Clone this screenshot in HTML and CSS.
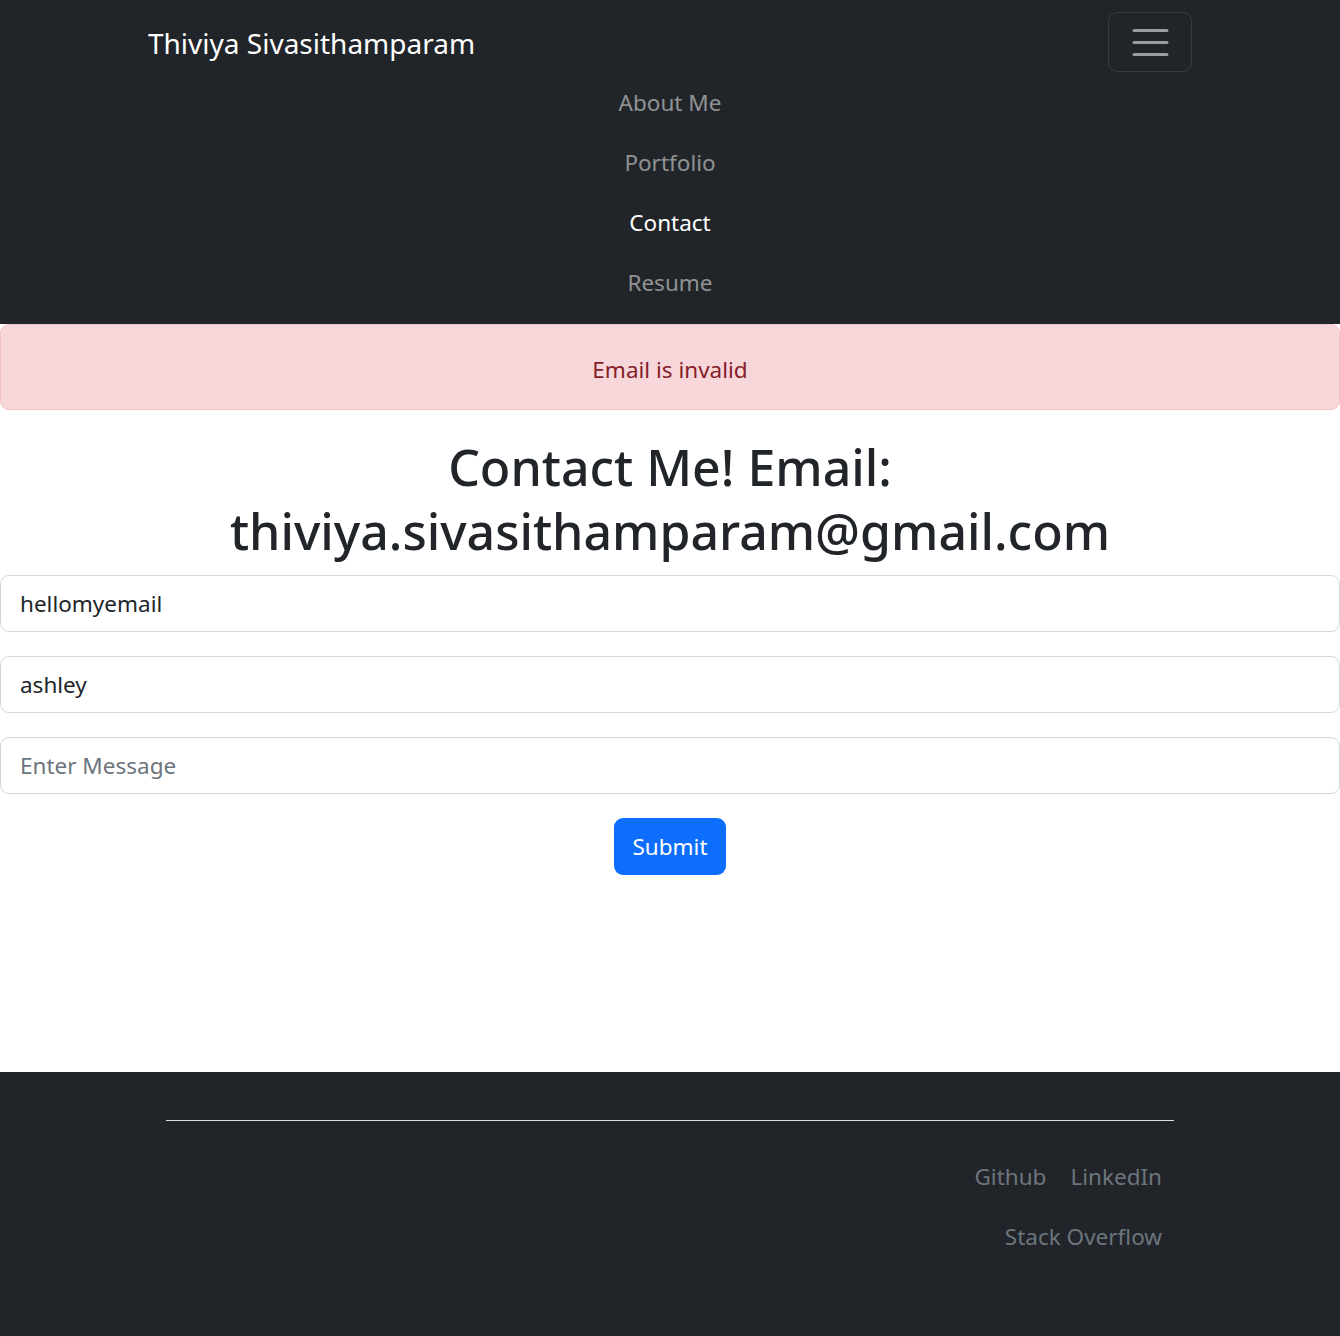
FILE: index.html
```html
<!DOCTYPE html>
<html lang="en">
<head>
<meta charset="utf-8">
<title>Contact - Thiviya Sivasithamparam</title>
<link rel="stylesheet" href="styles.css">
</head>
<body>
<header class="navbar">
  <div class="navbar-top">
    <a class="brand" href="#">Thiviya Sivasithamparam</a>
    <button class="toggler" type="button" aria-label="Toggle navigation">
      <svg width="45" height="45" viewBox="0 0 30 30" aria-hidden="true">
        <path d="M4 7h22M4 15h22M4 23h22" stroke="rgba(255,255,255,0.55)" stroke-width="2" stroke-linecap="round"/>
      </svg>
    </button>
  </div>
  <nav class="nav-list">
    <a class="nav-link" href="#">About Me</a>
    <a class="nav-link" href="#">Portfolio</a>
    <a class="nav-link active" href="#">Contact</a>
    <a class="nav-link" href="#">Resume</a>
  </nav>
</header>

<main class="content">
  <div class="alert">Email is invalid</div>
  <h1 class="title">Contact Me! Email:<br>thiviya.sivasithamparam@gmail.com</h1>
  <form class="form">
    <input class="field" type="text" value="hellomyemail">
    <input class="field" type="text" value="ashley">
    <input class="field" type="text" placeholder="Enter Message">
    <div class="actions">
      <button class="btn-submit" type="button">Submit</button>
    </div>
  </form>
</main>

<footer class="footer">
  <div class="footer-inner">
    <hr class="rule">
    <ul class="footer-links">
      <li><a href="#">Github</a></li>
      <li><a href="#">LinkedIn</a></li>
      <li><a href="#">Stack Overflow</a></li>
    </ul>
  </div>
</footer>
</body>
</html>
```

FILE: styles.css
```css
* { box-sizing: border-box; }

body {
  margin: 0;
  font-family: "Noto Sans", "Open Sans", "Liberation Sans", sans-serif;
  color: #212529;
  background: #fff;
}

a { text-decoration: none; }

.navbar {
  background: #212529;
  padding: 12px 0;
}

.navbar-top {
  width: 1080px;
  margin: 0 auto;
  padding: 0 18px;
  display: flex;
  justify-content: space-between;
  align-items: center;
  height: 60px;
}

.brand {
  color: #fff;
  font-size: 28px;
  line-height: 45px;
  margin-top: 2px;
}

.toggler {
  width: 84px;
  height: 60px;
  background: transparent;
  border: 1px solid rgba(255, 255, 255, 0.1);
  border-radius: 9px;
  padding: 0;
  display: flex;
  align-items: center;
  justify-content: center;
}

.toggler svg { display: block; }

.nav-list {
  display: flex;
  flex-direction: column;
  align-items: center;
}

.nav-link {
  display: block;
  color: rgba(255, 255, 255, 0.5);
  font-size: 22.5px;
  line-height: 36px;
  padding: 13px 0 11px;
}

.nav-link.active { color: #fff; }

.content {
  padding-bottom: 197px;
}

.alert {
  background: #f8d7da;
  border: 1px solid #f5c2c7;
  border-radius: 9px;
  color: #842029;
  text-align: center;
  font-size: 22.5px;
  line-height: 36px;
  padding: 27px 0 21px;
  margin-bottom: 24px;
}

.title {
  margin: 0 0 12px;
  text-align: center;
  font-size: 50px;
  line-height: 63.5px;
  font-weight: 500;
  color: #212529;
  padding-top: 2px;
}

.form {
  display: flex;
  flex-direction: column;
  gap: 24px;
}

.field {
  display: block;
  width: 100%;
  height: 57px;
  border: 1px solid #d3d7dc;
  border-radius: 9px;
  padding: 0 19px;
  font-family: inherit;
  font-size: 22.5px;
  color: #212529;
  background: #fff;
  outline: none;
}

.field::placeholder { color: #6c757d; }

.actions {
  display: flex;
  justify-content: center;
}

.btn-submit {
  height: 57px;
  padding: 0 18px;
  background: #0d6efd;
  color: #fff;
  border: none;
  border-radius: 9px;
  font-family: inherit;
  font-size: 22.5px;
}

.footer {
  background: #212529;
  padding: 48px 0 69px;
}

.footer-inner {
  width: 1008px;
  margin: 0 auto;
}

.rule {
  margin: 0;
  border: 0;
  border-top: 1px solid #dfe0e1;
}

.footer-links {
  list-style: none;
  margin: 26px 0 0 auto;
  padding: 0;
  width: 260px;
  display: flex;
  flex-wrap: wrap;
  justify-content: flex-end;
}

.footer-links a {
  display: block;
  color: #6c757d;
  font-size: 22.5px;
  line-height: 36px;
  padding: 12px 12px;
}
```
